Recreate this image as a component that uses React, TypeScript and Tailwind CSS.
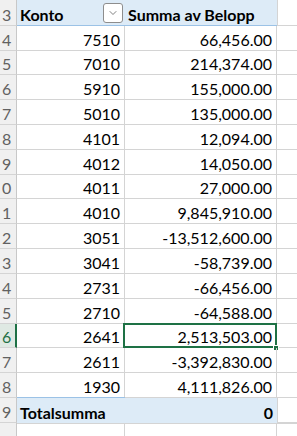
import React from 'react';
import { ChevronDown } from 'lucide-react';

// One row of the pivot: account number and summed amount
interface PivotRow {
    row: number;
    konto: string;
    summa: string;
}

const rows: PivotRow[] = [
    { row: 4, konto: '7510', summa: '66,456.00' },
    { row: 5, konto: '7010', summa: '214,374.00' },
    { row: 6, konto: '5910', summa: '155,000.00' },
    { row: 7, konto: '5010', summa: '135,000.00' },
    { row: 8, konto: '4101', summa: '12,094.00' },
    { row: 9, konto: '4012', summa: '14,050.00' },
    { row: 10, konto: '4011', summa: '27,000.00' },
    { row: 11, konto: '4010', summa: '9,845,910.00' },
    { row: 12, konto: '3051', summa: '-13,512,600.00' },
    { row: 13, konto: '3041', summa: '-58,739.00' },
    { row: 14, konto: '2731', summa: '-66,456.00' },
    { row: 15, konto: '2710', summa: '-64,588.00' },
    { row: 16, konto: '2641', summa: '2,513,503.00' },
    { row: 17, konto: '2611', summa: '-3,392,830.00' },
    { row: 18, konto: '1930', summa: '4,111,826.00' },
];

const SELECTED = 16;

// Row number cell on the far left; only the last digit fits in the narrow column
function RowHead({ n, selected }: { n?: number; selected?: boolean }) {
    return (
        <div
            className={
                selected
                    ? 'w-[17px] shrink-0 flex items-end pl-[2px] leading-[20px] bg-[#dfe9e3] text-[#1e7145] border-b border-[#d4d4d4] border-r-2 border-r-[#1e7145]'
                    : 'w-[17px] shrink-0 flex items-end pl-[2px] leading-[20px] bg-[#f0f0f0] text-[#616161] border-b border-[#d4d4d4] border-r border-r-[#c8c8c8]'
            }
        >
            {n !== undefined ? String(n).slice(-1) : null}
        </div>
    );
}

export default function App() {
    return (
        <div className="w-[297px] h-[436px] overflow-hidden bg-white text-black text-[16px] font-['Lato','Open_Sans',sans-serif]">
            {/* Header row 3 */}
            <div className="flex h-[25.7px]">
                <RowHead n={3} />
                <div className="w-[108px] shrink-0 flex items-end justify-between pl-[3px] pr-[2px] leading-[20px] font-bold bg-[#ddebf7] border-b border-[#9bc2e6]">
                    <span>Konto</span>
                    <span className="self-center mb-[-1px] w-[20px] h-[20px] flex items-center justify-center rounded-[3px] border border-[#8d8d8d] bg-white">
                        <ChevronDown size={12} strokeWidth={1.5} className="text-[#555]" />
                    </span>
                </div>
                <div className="w-[152px] shrink-0 flex items-end pl-[3px] leading-[20px] font-bold bg-[#ddebf7] border-b border-[#9bc2e6]">
                    Summa av Belopp
                </div>
                <div className="flex-1 border-l border-b border-[#d4d4d4]" />
            </div>

            {/* Data rows */}
            {rows.map(r => (
                <div key={r.row} className="flex h-[24.83px]">
                    <RowHead n={r.row} selected={r.row === SELECTED} />
                    <div className="w-[108px] shrink-0 flex items-end justify-end pr-[4px] leading-[20px] border-b border-r border-[#d4d4d4]">
                        {r.konto}
                    </div>
                    <div className="relative w-[152px] shrink-0 flex items-end justify-end pr-[4px] leading-[20px] border-b border-r border-[#d4d4d4]">
                        {r.summa}
                        {r.row === SELECTED && (
                            <>
                                <div className="absolute left-[-2px] top-[-1px] right-[-1px] bottom-[-1px] border-2 border-[#1e7145]" />
                                <div className="absolute right-[-3px] bottom-[-4px] w-[6px] h-[6px] bg-[#1e7145] border border-white" />
                            </>
                        )}
                    </div>
                    <div className="flex-1 border-b border-[#d4d4d4]" />
                </div>
            ))}

            {/* Grand total row 19 */}
            <div className="flex h-[24.83px]">
                <RowHead n={19} />
                <div className="w-[108px] shrink-0 flex items-end pl-[3px] leading-[20px] font-bold bg-[#ddebf7] border-t border-[#9bc2e6] mt-[-1px] h-[25.83px]">
                    Totalsumma
                </div>
                <div className="w-[152px] shrink-0 flex items-end justify-end pr-[4px] leading-[20px] font-bold bg-[#ddebf7] border-t border-[#9bc2e6] mt-[-1px] h-[25.83px]">
                    0
                </div>
                <div className="flex-1 border-l border-b border-[#d4d4d4]" />
            </div>

            {/* Row 20, cut off at the bottom */}
            <div className="flex h-[24.83px]">
                <RowHead />
                <div className="w-[108px] shrink-0 border-t border-r border-[#d4d4d4]" />
                <div className="w-[152px] shrink-0 border-t border-r border-[#d4d4d4]" />
                <div className="flex-1 border-t border-[#d4d4d4]" />
            </div>
        </div>
    );
}
